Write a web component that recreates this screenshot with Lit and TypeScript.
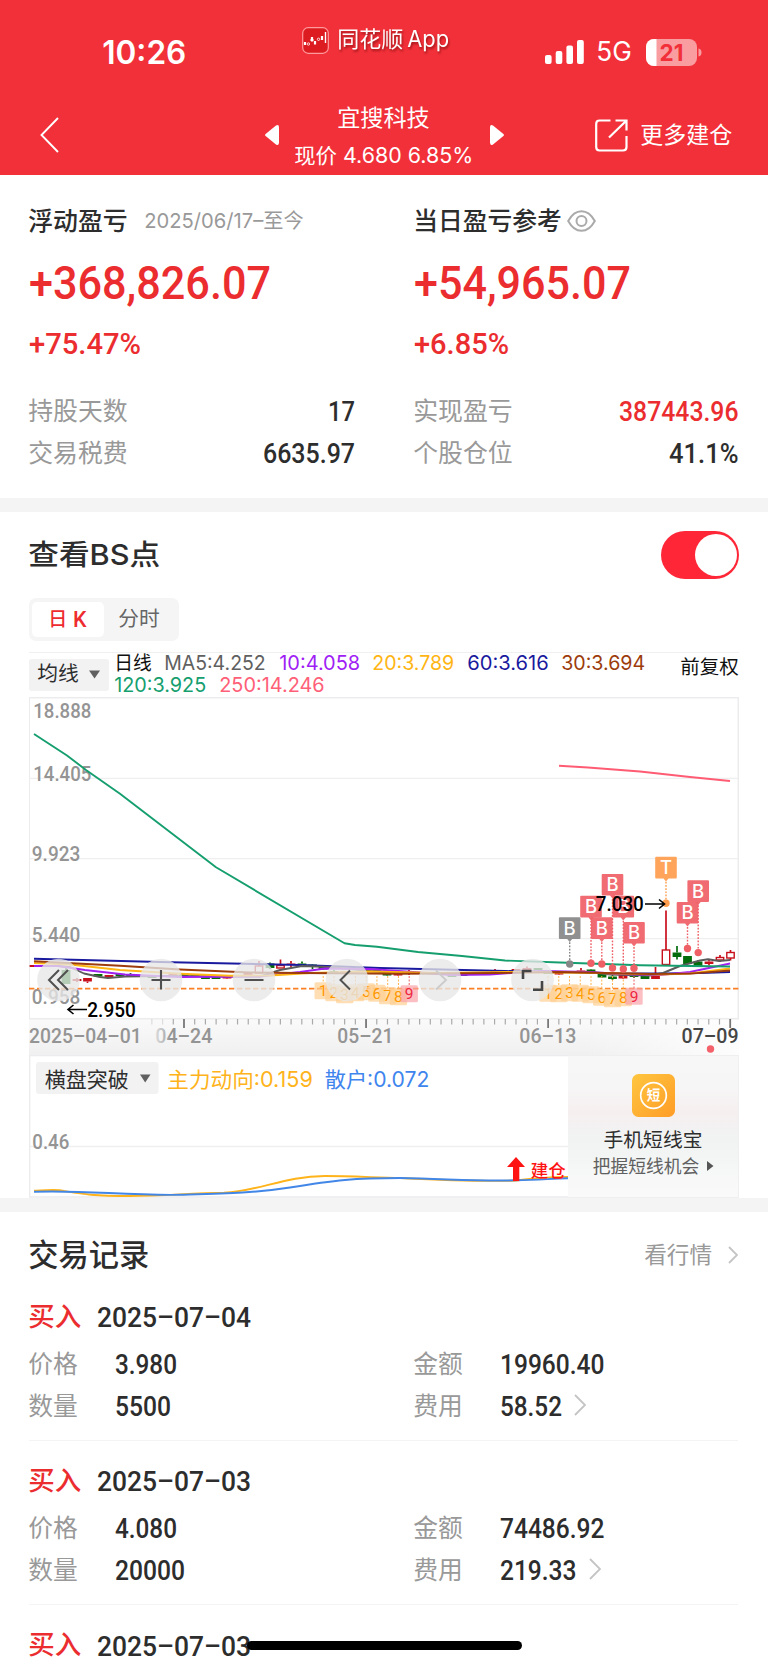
import { LitElement, html, svg, css, nothing } from "lit";
import { customElement } from "lit/decorators.js";

const CJK = /[\u4e00-\u9fff]/;

/** A single line of text fitted to an exact advance width. */
const fit = (text: string, width: number, size: number, cls = "") => {
  const din = cls.includes("din");
  return html`
  <svg class="fit ${cls}" width=${width} height=${size} font-size=${size}>
    <text x=${din ? 0 : -0.8} y=${size * (CJK.test(text) ? 0.88 : 0.86) - (din ? 0.2 : 0.9)} textLength=${width} lengthAdjust="spacingAndGlyphs">${text}</text>
  </svg>`;
};

const label = (text: string, x: number, cy: number, width: number, size: number, cls = "") => svg`
  <text class=${cls} x=${x - 0.7} y=${cy - 0.3 + size * (CJK.test(text) ? 0.38 : 0.356)} font-size=${size}
    textLength=${width} lengthAdjust="spacingAndGlyphs">${text}</text>`;

const RED = "#c8101c";
const GREEN = "#056c0c";

/* x, open/close band top and bottom, wick top and bottom, kind */
const candles: [number, number, number, number, number, string][] = [
  [34, 965, 967, 965, 967, "r"], [66, 970, 984, 968, 984, "g"], [77, 979, 981, 978, 982, "r"],
  [87.5, 978, 981.5, 978, 983, "r"], [98, 974, 976.5, 974, 977, "g"], [109, 975, 977.5, 975, 978, "r"],
  [120, 974, 976, 973, 976, "g"], [130.5, 974, 976, 973, 976, "g"], [152, 975.5, 978, 975, 978, "g"],
  [173, 974, 975.5, 974, 976, "r"], [184, 973.5, 976, 973, 976, "g"], [195, 974, 976, 974, 976, "g"],
  [205.5, 977, 979, 977, 979, "g"], [216, 977, 979, 977, 979, "g"], [227, 977, 978.5, 977, 979, "r"],
  [248, 972.5, 975, 972, 975, "r"], [259, 966, 973, 961, 973, "h"], [270, 963.5, 968, 962.5, 969, "g"],
  [280.5, 965.5, 968, 959.5, 968, "h"], [291, 963.5, 965, 961, 967, "r"], [302, 963.5, 965, 961.5, 966, "g"],
  [312.5, 964.5, 967, 964, 969, "g"], [323, 967, 969.5, 967, 970, "g"], [334, 971, 973, 970, 973, "g"],
  [345, 971, 973, 971, 973, "r"], [377, 970, 972, 970, 972, "g"], [387, 973.5, 975.5, 973, 976, "g"],
  [398, 974, 975.5, 973, 976, "r"], [409, 971, 974, 970, 975, "r"], [420, 972.5, 974, 972, 974, "g"],
  [452, 975, 977, 975, 977, "g"], [463, 974.5, 976, 974, 976, "g"], [495, 971, 972, 969, 972, "r"],
  [516, 969, 971, 969, 971, "r"], [527, 968, 970, 966.5, 971, "r"], [538, 968, 970, 968, 970, "g"],
  [548, 972.5, 974, 972, 974, "g"], [559, 972.5, 974.5, 972, 975, "r"], [581, 970.5, 972.5, 968, 973, "r"],
  [591, 969.5, 974, 969, 974, "g"], [602, 974, 977.5, 973, 978, "g"], [612.5, 976.5, 979, 975, 980, "g"],
  [623, 975, 978.5, 974, 979, "r"], [634, 974.5, 977, 974, 978, "g"], [645, 976, 979, 975, 979, "g"],
  [655.5, 975, 979, 967, 979, "r"], [666, 950, 964.5, 910.5, 964.5, "h"], [677, 952.5, 957, 946, 959.5, "g"],
  [687.5, 956, 964, 956, 964, "g"], [698, 961.5, 966, 960, 966, "g"], [709, 961.5, 964, 960, 965.5, "r"],
  [720, 957.5, 960, 955, 962, "h"], [730.5, 952.5, 958, 950, 960.5, "h"],
];

const averages: [string, string][] = [
  ["#1a1a9e", "34,958.8 160,962 300,965 380,968 505,971 560,972 610,973.3 665,973.5 700,973 730,972"],
  ["#5b5b5b", "34,966 58,966 70,967 84,973.5 100,977 108,978 125,976.5 160,976 260,976.5 280,970 302,966 330,967 380,972 450,974 520,972 590,972 610,974.5 650,975.5 663,973 680,966 700,960.5 708,959.3 719,961 730,960"],
  ["#a020f0", "34,966 58,966 85,970 125,974.5 180,977 260,976.5 300,972 325,968.5 370,969 420,972.5 450,975 490,974.5 540,971 590,972 620,974 660,975 690,972 730,963.5"],
  ["#ffb514", "34,963 70,964.5 120,970 180,973.7 230,975.7 270,975.5 310,973 370,971.5 440,973 505,972 600,973 660,974.5 690,973.5 730,968.5"],
  ["#9c3c0c", "34,961.2 120,965.8 180,969.5 250,972.5 300,973 400,973.8 500,973 560,972 650,974 690,973.6 730,970.5"],
  ["#159e6e", "34,734 67,755.5 86,770 120,793.7 216,867.3 344.5,943.3 355,945 377,946.8 418,952 462,956 505,960.5 560,962.5 640,965.2 690,966 730,966.5"],
  ["#ff5c74", "559,765.7 588,767.5 640,771.5 690,777 730,781"],
];

/* centre x, top, dot y, fill, letter */
const flags: [number, number, number, string, string][] = [
  [569.7, 917.3, 964, "#878787", "B"], [591, 895.8, 963.3, "#ef5f66", "B"],
  [601.8, 917.3, 964, "#ef5f66", "B"], [612.5, 874, 968, "#ef5f66", "B"], [623.3, 895.8, 969, "#ef5f66", "B"],
  [634, 922, 968.3, "#ef5f66", "B"], [666, 856.8, 903.3, "#ff9d4d", "T"],
  [687.5, 902, 948.5, "#ef5f66", "B"], [698.2, 880.3, 952.6, "#ef5f66", "B"],
];

const countA = [991, 993, 995, 993, 992, 993.5, 996, 997, 994];
const countB = [993.5, 994, 993, 993.5, 995, 997.5, 999, 998, 996.5];

const counts = (startX: number, ys: number[]) => ys.map((y, i) => {
  const x = startX + i * 10.75;
  const last = i === 8;
  return svg`
    <path d="M${x} 976V${y - 8}" stroke=${last ? "#ef5f66" : "#ffb24d"} stroke-dasharray="2 1.5" />
    <rect x=${x - 8.7} y=${y - 8.7} width="17.4" height="17" rx="1.5" fill=${last ? "#f9a0a6" : "#ffcf91"} opacity=".68" />
    <text x=${x} y=${y + 5.2} text-anchor="middle" class="din" font-size="15.5"
      fill=${last ? "#ee2540" : "#ff9700"}>${i + 1}</text>`;
});

const candleShape = ([x, t, b, wt, wb, k]: [number, number, number, number, number, string]) => {
  const c = k === "g" ? GREEN : RED;
  return svg`
    <path d="M${x} ${wt}V${t}M${x} ${b}V${wb}" stroke=${c} stroke-width="1.7" />
    <rect x=${x - (k === "h" ? 3.7 : 4.4)} y=${t} width=${k === "h" ? 7.4 : 8.8} height=${b - t}
      fill=${k === "h" ? "#fff" : c} stroke=${k === "h" ? c : "none"} stroke-width="1.4" />`;
};

@customElement("kline-chart")
class KlineChart extends LitElement {
  static styles = css`
    :host { display: block; height: 358px; }
    svg { display: block; font-family: Inter, "Noto Sans CJK SC", sans-serif; }
    .din { font-family: Roboto, sans-serif; }
    .axis { font-family: Roboto, sans-serif; fill: #949494; font-weight: 500; }
    .first { font-family: Roboto, sans-serif; fill: url(#zero); font-weight: 500; }
    .dark { font-family: Roboto, sans-serif; fill: #454545; font-weight: 500; }
    .price { font-family: Roboto, sans-serif; fill: #000; font-weight: 500; }
    .flag { font-family: Inter, sans-serif; fill: #fff; font-weight: 500; }
  `;

  render() {
    const ticks = Array.from({ length: 55 }, (_, i) => 730.2 - i * 10.71);
    return html`<svg width="710" height="358" viewBox="29 697 710 358" fill="none">
      <defs>
        <linearGradient id="dates" x1="0" y1="0" x2="0" y2="1">
          <stop offset="0" stop-color="#fafafa" /><stop offset="1" stop-color="#f0f0f0" />
        </linearGradient>
        <linearGradient id="fade" x1="0" y1="0" x2="1" y2="0">
          <stop offset=".78" stop-color="#fff" stop-opacity="0" /><stop offset="1" stop-color="#fff" stop-opacity=".85" />
        </linearGradient>
        <linearGradient id="zero" gradientUnits="userSpaceOnUse" x1="155" y1="0" x2="170" y2="0">
          <stop offset="0" stop-color="#dcdcdc" /><stop offset=".5" stop-color="#c2c2c2" /><stop offset="1" stop-color="#949494" />
        </linearGradient>
      </defs>
      <rect x="29" y="1019" width="710" height="36" fill="url(#dates)" />
      <rect x="29" y="1019" width="710" height="36" fill="url(#fade)" />
      <rect x="29.3" y="697.7" width="709" height="321" fill="#fff" stroke="#ececee" stroke-width="1.5" />
      <path d="M29 778.3H738M29 858.6H738M29 938.7H738" stroke="#efeff0" stroke-width="1.3" />

      ${label("18.888", 34, 711.5, 58, 20.5, "axis")}
      ${label("14.405", 34, 773.7, 58, 20.5, "axis")}
      ${label("9.923", 32.5, 854.5, 48.5, 20.5, "axis")}
      ${label("5.440", 32.5, 935, 48.5, 20.5, "axis")}
      ${label("0.958", 32.5, 997.5, 48.5, 20.5, "axis")}

      ${candles.map(candleShape)}
      ${averages.map(([c, p]) => svg`<polyline points=${p} stroke=${c} stroke-width="1.9" stroke-linejoin="round" />`)}
      <path d="M29 988.6H739" stroke="#fb8024" stroke-width="1.9" stroke-dasharray="5.4 2.6" />
      ${counts(323.2, countA)}
      ${counts(548, countB)}

      ${flags.map(([x, top, dot, c]) => svg`
        <path d="M${x} ${top + 25}V${dot}" stroke=${c} stroke-width="1.4" stroke-dasharray="1.7 1.5" />
        <circle cx=${x} cy=${dot} r="3.7" fill=${c} />`)}
      ${flags.map(([x, top, , c, letter]) => svg`
        <path d="M${x - 9.8} ${top}h19.6q1 0 1 1v19.6q0 1-1 1h-7.3l-2.5 3-2.5-3h-7.3q-1 0-1-1v-19.6q0-1 1-1z" fill=${c} opacity=".92" />
        <text class="flag" x=${x} y=${top + 17.4} font-size="18.5" text-anchor="middle">${letter}</text>`)}

      ${label("7.030", 596.5, 904, 48, 21, "price")}
      <path d="M645 904H664M659 899.5L664.5 904L659 908.5" stroke="#000" stroke-width="1.6" />
      ${label("2.950", 88, 1010, 48.5, 21, "price")}
      <path d="M87 1009.5H68M73.5 1005L68 1009.5L73.5 1014" stroke="#000" stroke-width="1.6" />

      ${[58.5, 161, 254, 347, 440, 532.5].map((x) => svg`<circle cx=${x} cy="980" r="21.3" fill="#e7e7e7" opacity=".78" />`)}
      <path d="M59 970L49 980L59 990M68 970L58 980L68 990" stroke="#505050" stroke-width="2" />
      <path d="M151.5 980H170.5M161 970V989.5M244.5 980H263.5" stroke="#505050" stroke-width="2.1" />
      <path d="M350 970.5L340.5 980L350 989.5" stroke="#505050" stroke-width="2" />
      <path d="M436 970.5L446 980L436 989.5" stroke="#cbcbcb" stroke-width="1.8" />
      <path d="M523 979V971H531.5M542 981V989.7H533" stroke="#454545" stroke-width="2.6" />

      ${ticks.map((x, i) => {
        const major = i % 17 === 0;
        return svg`<path d="M${x} 1019V${major ? 1028 : 1024.5}" stroke=${major ? "#777" : "#aaa"}
          stroke-width=${major ? 1.8 : 1.2} opacity=${i > 52 ? 0.35 : 1} />`;
      })}
      ${label("2025–04–01", 29.8, 1036.2, 112.5, 20, "axis")}
      ${label("04–24", 156, 1036.2, 57, 20, "first")}
      ${label("05–21", 338, 1036.2, 56, 20, "axis")}
      ${label("06–13", 520, 1036.2, 57, 20, "axis")}
      ${label("07–09", 682.3, 1036.2, 57, 20, "dark")}
      <circle cx="710.5" cy="1049" r="3.7" fill="#f4616a" />
    </svg>`;
  }
}

@customElement("trend-panel")
class TrendPanel extends LitElement {
  static styles = css`
    :host { display: flex; height: 143px; }
    svg { display: block; flex: none; font-family: Inter, "Noto Sans CJK SC", sans-serif; }
    .axis { font-family: Roboto, sans-serif; fill: #949494; font-weight: 500; }
    .ink { fill: #2e2e2e; }
    .gold { fill: #ffb31a; }
    .blue { fill: #3f85ee; }
    .build { fill: #ff1414; font-weight: 500; }
    .promo {
      width: 171px; box-sizing: border-box; padding-top: 18px;
      display: flex; flex-direction: column; align-items: center;
      background: linear-gradient(180deg, #f7f7f8 0%, #f7f6f6 22%, #f6eff0 40%, #f1f3f3 58%, #f2f5f4 70%, #f8f8f9 88%, #f9f9fa 100%);
      border: 1px solid #efefef; border-left: 0;
      font-family: "Noto Sans CJK SC", sans-serif; white-space: nowrap;
    }
    .name { font-size: 19.8px; line-height: 26px; color: #2e2e2e; margin-top: 9px; }
    .hint { display: flex; align-items: center; gap: 8px; font-size: 17.8px; line-height: 27px; color: #606060; margin-left: 1px; }
    .badge { fill: #fff; font-weight: 700; font-family: "Noto Sans CJK SC", sans-serif; }
  `;

  render() {
    return html`
      <svg width="539" height="143" viewBox="29 1055 539 143" fill="none">
        <path d="M568 1055.5H29.7V1197H568" stroke="#ececee" stroke-width="1.4" />
        <path d="M30 1146.5H568" stroke="#efeff0" stroke-width="1.3" />
        <rect x="36" y="1062" width="122.5" height="32" rx="3" fill="#f2f2f3" />
        ${label("横盘突破", 45.5, 1079, 84, 21, "ink")}
        <path d="M140 1074.5H150.5L145.2 1082.5Z" fill="#606060" />
        ${label("主力动向:0.159", 168, 1079, 145.5, 21, "gold")}
        ${label("散户:0.072", 325.5, 1079, 104.5, 21, "blue")}
        ${label("0.46", 33, 1142, 37, 20.5, "axis")}
        <path d="M34 1190.7C46 1191 54 1188.6 64 1191C82 1194 92 1196 130 1196C165 1196 190 1193 224 1192.7C260 1191 285 1176 325 1176C350 1176 375 1177.5 400 1178C440 1180 480 1182 516 1180.5C535 1178 548 1177 568 1177" stroke="#ffb31a" stroke-width="1.9" />
        <path d="M34 1191.7C90 1190 120 1195.5 180 1194.8C225 1193.5 255 1193 290 1187.5C335 1180 355 1178 400 1178C450 1179 480 1181.5 516 1180.3C540 1180 550 1178.7 568 1178.3" stroke="#4287e8" stroke-width="1.9" />
        <path d="M516 1157L525 1167H519.3V1181H513V1167H507Z" fill="#ff1414" />
        ${label("建仓", 531.5, 1171, 35, 17.5, "build")}
      </svg>
      <div class="promo">
        <svg width="43" height="43" viewBox="0 0 43 43">
          <defs><linearGradient id="g" x1="0" y1="0" x2="1" y2="1">
            <stop offset="0" stop-color="#ffc63f" /><stop offset="1" stop-color="#ff9c27" />
          </linearGradient></defs>
          <rect width="43" height="43" rx="6.5" fill="url(#g)" />
          <circle cx="21.5" cy="21.5" r="12.8" fill="none" stroke="#fff" stroke-width="1.7" />
          <text class="badge" x="21.5" y="26.4" font-size="13.5" text-anchor="middle">短</text>
        </svg>
        <div class="name">手机短线宝</div>
        <div class="hint">把握短线机会
          <svg width="7" height="12" viewBox="0 0 7 12"><path d="M0 1L6.5 6L0 11Z" fill="#555" /></svg>
        </div>
      </div>`;
  }
}

interface Trade { date: string; cells: [string, string, number][]; }

const trades: Trade[] = [
  { date: "2025–07–04", cells: [["价格", "3.980", 62], ["金额", "19960.40", 104.5], ["数量", "5500", 56], ["费用", "58.52", 62]] },
  { date: "2025–07–03", cells: [["价格", "4.080", 62], ["金额", "74486.92", 104.5], ["数量", "20000", 70], ["费用", "219.33", 76.5]] },
  { date: "2025–07–03", cells: [] },
];

@customElement("app-root")
class AppRoot extends LitElement {
  static styles = css`
    :host {
      display: block; position: relative; width: 768px; height: 1665px; overflow: hidden;
      background: #fff; color: #2d2d2d; font-family: Inter, "Noto Sans CJK SC", sans-serif;
    }
    svg { display: block; flex: none; }
    .fit { overflow: visible; fill: currentColor; }
    .din { font-family: Roboto, sans-serif; }
    .m { font-weight: 500; }
    .sb { font-weight: 600; }
    .grey { color: #999; }
    .red { color: #eb2d2f; }

    header { height: 174.5px; background: #f23039; color: #fff; }
    .status { height: 82px; display: grid; grid-template-columns: 302px 243px 1fr; align-items: start; }
    .clock { padding: 37px 0 0 103px; }
    .appname { padding-top: 27px; display: flex; align-items: center; gap: 9px; }
    .shadow { display: flex; gap: 4px; filter: drop-shadow(1px 2px 1px rgba(90, 0, 0, .55)); }
    .signals { padding-top: 38px; display: flex; align-items: center; height: 28px; gap: 13px; }
    .nav { height: 92px; display: grid; grid-template-columns: 264.5px 239px 1fr; }
    .back { padding: 35px 0 0 40px; }
    .stock { display: flex; justify-content: space-between; }
    .stock > svg { margin-top: 43px; }
    .quote { display: flex; flex-direction: column; align-items: center; padding-top: 24.5px; gap: 15.5px; }
    .more { display: flex; align-items: center; gap: 13px; padding: 14px 0 0 91.5px; }

    .profit { height: 323.5px; box-sizing: border-box; padding: 26.5px 30px 0 29px; display: grid; grid-template-columns: 326px 324px; column-gap: 59px; }
    .head { height: 40px; display: flex; align-items: center; }
    .date { margin-left: 16px; }
    .eye { margin-left: 4px; }
    .big { height: 83px; display: flex; align-items: center; }
    .pct { height: 40px; display: flex; align-items: center; margin-bottom: 26px; }
    .row { height: 42px; display: flex; align-items: center; justify-content: space-between; }
    .bar { height: 14px; background: #f4f4f5; }

    .bs { height: 686px; box-sizing: border-box; padding: 0 29px; }
    .bshead { height: 86px; display: flex; align-items: center; justify-content: space-between; }
    .switch { width: 78px; height: 48px; box-sizing: border-box; padding: 3px 2.5px; border-radius: 24px; background: #ff2638; display: flex; justify-content: flex-end; }
    .knob { width: 42px; height: 42px; border-radius: 50%; background: #fff; }
    .tabs { width: 149.5px; height: 42.5px; box-sizing: border-box; padding: 3.5px 3px; border-radius: 7px; background: #f5f5f6; display: flex; margin-bottom: 11px; }
    .tab { flex: 1; display: flex; align-items: center; justify-content: center; gap: 4.5px; color: #666; }
    .tab.on { flex: none; width: 71.5px; border-radius: 5px; background: #fff; color: #ee2c30; }
    .legend { height: 45.5px; box-sizing: border-box; border-top: 1.5px solid #f0f0f1; display: flex; }
    .pick { width: 80px; height: 32px; box-sizing: border-box; margin-top: 6px; padding-left: 9px; border-radius: 3px; background: #f2f2f3; display: flex; align-items: center; gap: 9.5px; }
    .lines { width: 566px; padding-left: 6.5px; display: flex; flex-direction: column; }
    .line { height: 22.8px; display: flex; align-items: center; gap: 12.6px; }
    .adjust { padding-top: 5px; color: #111; }
    .black { color: #111; }
    .ma5 { color: #606060; } .ma10 { color: #a01ef5; } .ma20 { color: #ffb514; }
    .ma60 { color: #1a1a9e; } .ma30 { color: #9c3c0c; } .ma120 { color: #159e6e; } .ma250 { color: #ff6078; }

    .records { padding: 0 30px 0 29px; }
    .rechead { height: 86px; display: flex; align-items: center; justify-content: space-between; }
    .link { display: flex; align-items: center; gap: 15px; }
    .trade { height: 143px; box-sizing: border-box; border-bottom: 1.5px solid #f4f4f5; margin-bottom: 21.3px; }
    .when { height: 38px; display: flex; align-items: center; gap: 15px; margin-bottom: 7px; }
    .cells { display: grid; grid-template-columns: 385px 1fr; }
    .cell { height: 42px; display: flex; align-items: center; }
    .cell .grey { margin-right: 36px; }
    .cell .arrow { margin-left: 12.5px; margin-top: -2px; }
    .home { position: absolute; left: 247px; bottom: 15px; width: 275px; height: 9px; border-radius: 5px; background: #000; }
  `;

  private chevron(w: number, h: number, cls = "") {
    return html`<svg class=${cls} width=${w} height=${h} fill="none" stroke="#c4c4c4" stroke-width="1.8">
      <path d="M1 1L${w - 1} ${h / 2}L1 ${h - 1}" /></svg>`;
  }

  private stat(name: string, value: string, width: number, cls = "") {
    return html`<div class="row">${fit(name, 99.5, 24.8, "grey")}${fit(value, width, 27, `din m ${cls}`)}</div>`;
  }

  private trade(t: Trade) {
    return html`<article class="trade">
      <div class="when">${fit("买入", 53, 26.3, "m red")}${fit(t.date, 154, 28, "din m")}</div>
      <div class="cells">
        ${t.cells.map(([name, value, width], i) => html`<div class="cell">
          ${fit(name, 49.5, 24.6, "grey")}${fit(value, width, 27, "din m")}
          ${i === 3 ? this.chevron(12, 22, "arrow") : nothing}
        </div>`)}
      </div>
    </article>`;
  }

  render() {
    return html`
      <header>
        <div class="status">
          <div class="clock">${fit("10:26", 84, 32, "sb")}</div>
          <div class="appname">
            <svg width="27" height="27" viewBox="0 0 27 27" fill="none">
              <rect x=".7" y=".7" width="25.6" height="25.6" rx="5.5" fill="#dd1c22" stroke="#ff9a9c" stroke-width="1.2" />
              <path d="M3 15V18M10 10V14M13 14V17.5M20 9V13" stroke="#fff" stroke-width="2.2" />
              <circle cx="6.4" cy="17" r="1.2" stroke="#fff" stroke-width=".8" /><circle cx="10" cy="13" r="1.3" stroke="#fff" stroke-width=".8" />
              <circle cx="16.5" cy="12.3" r="1.2" stroke="#fff" stroke-width=".8" /><path d="M23.5 5V16" stroke="#fff" stroke-width="1.4" />
            </svg>
            <div class="shadow">${fit("同花顺", 66, 22)}${fit("App", 42, 22.5)}</div>
          </div>
          <div class="signals">
            <svg width="39" height="26" viewBox="0 0 39 26" fill="#fff">
              <rect y="16" width="6.6" height="9" rx="2" /><rect x="10.7" y="12" width="6.6" height="13" rx="2" />
              <rect x="21.4" y="6.5" width="6.6" height="18.5" rx="2" /><rect x="32" y="1" width="6.8" height="24" rx="2" />
            </svg>
            <div>${fit("5G", 35.5, 26.5)}</div>
            <svg width="56" height="27" viewBox="0 0 56 27">
              <defs><clipPath id="b"><rect width="51" height="27" rx="8" /></clipPath></defs>
              <rect width="51" height="27" rx="8" fill="#f99da1" />
              <rect width="10.5" height="27" fill="#fff" clip-path="url(#b)" />
              <path d="M52.5 9.5Q55.5 10 55.5 13.5T52.5 17.5Z" fill="#f99da1" />
              <text x="25.5" y="21.5" text-anchor="middle" font-size="22.5" font-weight="700" fill="#f23039">21</text>
            </svg>
          </div>
        </div>
        <nav class="nav">
          <div class="back"><svg width="19" height="36" fill="none" stroke="#fff" stroke-width="1.9"><path d="M18 1L1.5 18L18 35" /></svg></div>
          <div class="stock">
            <svg width="14" height="20" fill="#fff"><path d="M.6 9L11 .6Q14 -1 14 2.5V17.5Q14 21 11 19.4L.6 11Q-.5 10 .6 9Z" /></svg>
            <div class="quote">${fit("宜搜科技", 92.5, 23)}${fit("现价 4.680 6.85%", 179, 21)}</div>
            <svg width="14" height="20" fill="#fff"><path d="M13.4 9L3 .6Q0 -1 0 2.5V17.5Q0 21 3 19.4L13.4 11Q14.5 10 13.4 9Z" /></svg>
          </div>
          <div class="more">
            <svg width="33" height="33" fill="none" stroke="#fff" stroke-width="2.2">
              <path d="M15.5 1.5H4.5Q1.2 1.5 1.2 5V28Q1.2 31.5 4.5 31.5H28Q31.5 31.5 31.5 28V17M20.5 1.5H31.5V11.5M31 2L14 18.5" />
            </svg>
            ${fit("更多建仓", 92, 23)}
          </div>
        </nav>
      </header>

      <section class="profit">
        <div>
          <div class="head">${fit("浮动盈亏", 99.5, 24.8, "m")}<div class="date">${fit("2025/06/17–至今", 159.5, 20.5, "grey")}</div></div>
          <div class="big">${fit("+368,826.07", 242, 46.5, "din m red")}</div>
          <div class="pct">${fit("+75.47%", 112, 29.5, "din m red")}</div>
          ${this.stat("持股天数", "17", 27)}
          ${this.stat("交易税费", "6635.97", 92)}
        </div>
        <div>
          <div class="head">${fit("当日盈亏参考", 148.5, 24.8, "m")}
            <svg class="eye" width="29" height="22" fill="none" stroke="#aaa" stroke-width="2">
              <path d="M1.2 11C5 4 9 1.2 14.5 1.2S24 4 27.8 11C24 18 20 20.8 14.5 20.8S5 18 1.2 11Z" /><circle cx="14.5" cy="11" r="5" />
            </svg>
          </div>
          <div class="big">${fit("+54,965.07", 217, 46.5, "din m red")}</div>
          <div class="pct">${fit("+6.85%", 95, 29.5, "din m red")}</div>
          ${this.stat("实现盈亏", "387443.96", 119.5, "red")}
          ${this.stat("个股仓位", "41.1%", 69.5)}
        </div>
      </section>
      <div class="bar"></div>

      <section class="bs">
        <div class="bshead">${fit("查看BS点", 132, 28.5, "m")}<div class="switch"><div class="knob"></div></div></div>
        <div class="tabs">
          <div class="tab on">${fit("日", 19, 19.5, "m")}${fit("K", 13.5, 21.5, "din m")}</div>
          <div class="tab">${fit("分时", 41.5, 20.5)}</div>
        </div>
        <div class="legend">
          <div class="pick">${fit("均线", 41.5, 20.7)}<svg width="11" height="9"><path d="M0 .5H11L5.5 8.5Z" fill="#606060" /></svg></div>
          <div class="lines">
            <div class="line">
              ${fit("日线", 37.5, 19, "black")}${fit("MA5:4.252", 101.5, 20, "ma5")}${fit("10:4.058", 81, 20, "ma10")}
              ${fit("20:3.789", 82, 20, "ma20")}${fit("60:3.616", 81.5, 20, "ma60")}${fit("30:3.694", 84, 20, "ma30")}
            </div>
            <div class="line">${fit("120:3.925", 92, 20, "ma120")}${fit("250:14.246", 105.5, 20, "ma250")}</div>
          </div>
          <div class="adjust">${fit("前复权", 58.5, 19.5)}</div>
        </div>
        <kline-chart></kline-chart>
        <trend-panel></trend-panel>
      </section>
      <div class="bar"></div>

      <section class="records">
        <div class="rechead">${fit("交易记录", 121, 30.2, "m")}
          <div class="link">${fit("看行情", 68, 22.6, "grey")}${this.chevron(10, 18)}</div>
        </div>
        ${trades.map((t) => this.trade(t))}
      </section>
      <div class="home"></div>`;
  }
}
